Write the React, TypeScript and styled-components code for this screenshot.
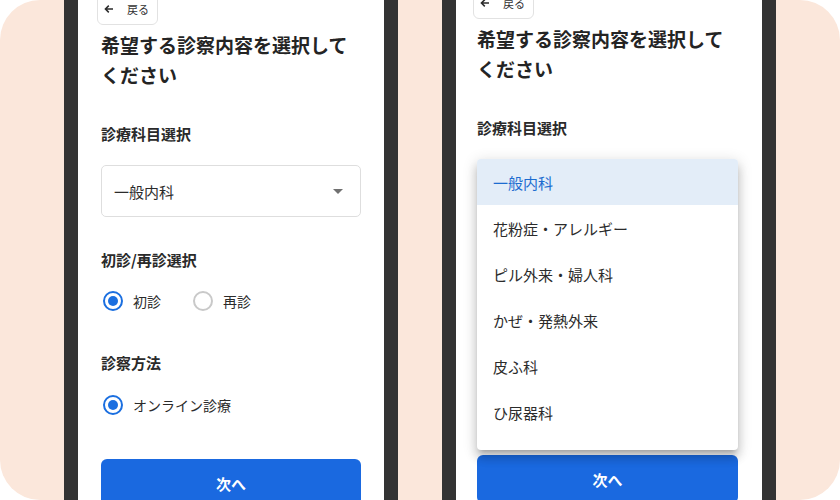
import React from "react";
import styled, { createGlobalStyle } from "styled-components";

const GlobalStyle = createGlobalStyle`
  html, body {
    margin: 0;
    padding: 0;
    background: #ffffff;
  }
  body {
    font-family: "Noto Sans CJK JP", "Noto Sans", sans-serif;
    color: #222222;
  }
  * { box-sizing: border-box; }
`;

const Panel = styled.div`
  width: 840px;
  height: 500px;
  background: #fbe7db;
  border-radius: 40px;
  overflow: hidden;
  display: flex;
  justify-content: center;
  align-items: center;
  gap: 44px;
`;

const Phone = styled.div`
  flex-shrink: 0;
  width: 334px;
  height: 540px;
  background: #ffffff;
  border-left: 14px solid #333333;
  border-right: 14px solid #333333;
`;

const Screen = styled.div<{ $top: number; $left: number; $right: number }>`
  display: flex;
  flex-direction: column;
  padding: ${(p) => p.$top}px ${(p) => p.$right}px 0 ${(p) => p.$left}px;
`;

const BackButton = styled.button`
  align-self: flex-start;
  display: flex;
  align-items: center;
  height: 32px;
  margin-left: -4px;
  padding: 0 8px 0 6px;
  background: #ffffff;
  border: 1px solid #e2e2e2;
  border-radius: 6px;
  font-family: inherit;
  font-size: 11px;
  color: #333333;
  gap: 13px;
`;

const Title = styled.h1`
  margin: 5px 0 0;
  font-size: 19px;
  line-height: 30px;
  font-weight: 700;
  color: #242424;
  letter-spacing: 0;
`;

const FieldLabel = styled.div<{ $gap: number }>`
  margin-top: ${(p) => p.$gap}px;
  font-size: 15px;
  line-height: 22px;
  font-weight: 700;
  color: #2a2a2a;
`;

const SelectField = styled.div`
  position: relative;
  margin-top: 20px;
  height: 52px;
  display: flex;
  align-items: center;
  justify-content: space-between;
  padding: 0 17px 0 12px;
  border: 1px solid #dedede;
  border-radius: 5px;
  font-size: 15px;
  color: #2b2b2b;
`;

const Caret = styled.span`
  width: 0;
  height: 0;
  border-left: 5px solid transparent;
  border-right: 5px solid transparent;
  border-top: 5px solid #707070;
`;

const Menu = styled.ul`
  position: absolute;
  top: -1px;
  left: -1px;
  right: -1px;
  z-index: 2;
  margin: 0;
  padding: 0 0 15px;
  list-style: none;
  background: #ffffff;
  border-radius: 4px;
  overflow: hidden;
  box-shadow: 0 5px 5px -3px rgba(0, 0, 0, 0.2), 0 8px 10px 1px rgba(0, 0, 0, 0.14),
    0 3px 14px 2px rgba(0, 0, 0, 0.12);
`;

const MenuItem = styled.li<{ $active?: boolean }>`
  height: 46px;
  display: flex;
  align-items: center;
  padding-left: 16px;
  font-size: 15px;
  color: ${(p) => (p.$active ? "#1c6cd0" : "#2b2b2b")};
  background: ${(p) => (p.$active ? "#e3edf8" : "transparent")};
`;

/* Fields that sit beneath the open department menu */
const Covered = styled.div<{ $hidden?: boolean }>`
  display: flex;
  flex-direction: column;
  visibility: ${(p) => (p.$hidden ? "hidden" : "visible")};
`;

const RadioGroup = styled.div<{ $gap: number }>`
  margin-top: ${(p) => p.$gap}px;
  height: 42px;
  display: flex;
  align-items: center;
  gap: 32px;
  padding-left: 2px;
`;

const Option = styled.label`
  display: flex;
  align-items: center;
  gap: 10px;
  font-size: 14px;
  color: #2b2b2b;
`;

const RadioDot = styled.span<{ $checked?: boolean }>`
  width: 20px;
  height: 20px;
  border-radius: 50%;
  border: 2px solid ${(p) => (p.$checked ? "#1b6fe0" : "#c9c9c9")};
  display: flex;
  align-items: center;
  justify-content: center;
  &::after {
    content: "";
    width: 10px;
    height: 10px;
    border-radius: 50%;
    background: ${(p) => (p.$checked ? "#1b6fe0" : "transparent")};
  }
`;

const NextButton = styled.button<{ $gap: number }>`
  margin-top: ${(p) => p.$gap}px;
  height: 48px;
  border: none;
  border-radius: 6px;
  background: #1a69e0;
  color: #ffffff;
  font-family: inherit;
  font-size: 15px;
  font-weight: 700;
`;

const BackArrow = () => (
  <svg width="10" height="10" viewBox="0 0 10 10" fill="none">
    <path d="M9 5H1.5M4.8 1.6 1.4 5l3.4 3.4" stroke="#2b2b2b" strokeWidth="1.5" />
  </svg>
);

const departments = [
  "一般内科",
  "花粉症・アレルギー",
  "ピル外来・婦人科",
  "かぜ・発熱外来",
  "皮ふ科",
  "ひ尿器科",
];

type FormProps = {
  top: number;
  left: number;
  right: number;
  buttonGap: number;
  menuOpen?: boolean;
};

const ConsultForm = ({ top, left, right, buttonGap, menuOpen }: FormProps) => (
  <Phone>
    <Screen $top={top} $left={left} $right={right}>
      <BackButton>
        <BackArrow />
        戻る
      </BackButton>
      <Title>希望する診察内容を選択してください</Title>

      <FieldLabel $gap={33}>診療科目選択</FieldLabel>
      <SelectField>
        <Covered $hidden={menuOpen}>一般内科</Covered>
        <Caret />
        {menuOpen && (
          <Menu>
            {departments.map((d, i) => (
              <MenuItem key={d} $active={i === 0}>
                {d}
              </MenuItem>
            ))}
          </Menu>
        )}
      </SelectField>

      <Covered $hidden={menuOpen}>
        <FieldLabel $gap={32}>初診/再診選択</FieldLabel>
        <RadioGroup $gap={9}>
          <Option>
            <RadioDot $checked />
            初診
          </Option>
          <Option>
            <RadioDot />
            再診
          </Option>
        </RadioGroup>

        <FieldLabel $gap={30}>診察方法</FieldLabel>
        <RadioGroup $gap={10}>
          <Option>
            <RadioDot $checked />
            オンライン診療
          </Option>
        </RadioGroup>
      </Covered>

      <NextButton $gap={buttonGap}>次へ</NextButton>
    </Screen>
  </Phone>
);

export default function App() {
  return (
    <>
      <GlobalStyle />
      <Panel>
        <ConsultForm top={13} left={23} right={23} buttonGap={33} />
        <ConsultForm top={7} left={21} right={24} buttonGap={35} menuOpen />
      </Panel>
    </>
  );
}
